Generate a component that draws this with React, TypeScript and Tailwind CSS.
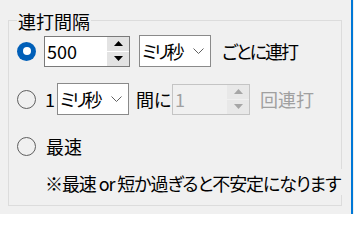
import React from 'react'

// Windows-style radio (selected = filled accent with white dot)
function Radio({ checked }: { checked?: boolean }) {
    return checked ? (
        <div className="w-[19px] h-[19px] shrink-0 rounded-full bg-[#005fb8] flex items-center justify-center">
            <div className="w-[8px] h-[8px] rounded-full bg-white" />
        </div>
    ) : (
        <div className="w-[19px] h-[19px] shrink-0 rounded-full border border-[#5f5f5f] bg-[#f0f0f0]" />
    )
}

function Arrow({ up, color }: { up?: boolean; color: string }) {
    return (
        <svg width="9" height="5" viewBox="0 0 9 5">
            <polygon points={up ? '0,5 4.5,0 9,5' : '0,0 9,0 4.5,5'} fill={color} />
        </svg>
    )
}

function SpinBox({ value, disabled, width }: { value: string; disabled?: boolean; width: string }) {
    const arrow = disabled ? '#a6a6a6' : '#000000'
    return (
        <div
            className={`${width} h-[31px] shrink-0 flex border ${disabled ? 'border-[#c4c4c4] bg-[#f0f0f0] text-[#a0a0a0]' : 'border-[#7a7a7a] bg-white'}`}
        >
            <span className="flex-1 pl-[2px] leading-[29px]">{value}</span>
            <div className="w-[22px] flex flex-col gap-[1px]">
                <div className={`flex-1 flex items-center justify-center ${disabled ? 'bg-[#e8e8e8]' : 'bg-[#e3e3e3]'}`}>
                    <Arrow up color={arrow} />
                </div>
                <div className={`flex-1 flex items-center justify-center ${disabled ? 'bg-[#e8e8e8]' : 'bg-[#e3e3e3]'}`}>
                    <Arrow color={arrow} />
                </div>
            </div>
        </div>
    )
}

function Dropdown() {
    return (
        <div className="w-[72px] h-[32px] shrink-0 flex items-center border border-[#8a8a8a] bg-white">
            <span className="pl-[2px] tracking-[-2.5px] whitespace-nowrap">ミリ秒</span>
            <svg className="ml-auto mr-[6px] shrink-0" width="11" height="6" viewBox="0 0 11 6">
                <polyline points="0.5,0.5 5.5,5.5 10.5,0.5" fill="none" stroke="#606060" strokeWidth="1" />
            </svg>
        </div>
    )
}

export default function App() {
    return (
        <div className="flex w-[354px] h-[214px] overflow-hidden bg-[#f0f0f0] text-black text-[18px] leading-[24px] font-['Noto_Sans_CJK_JP',sans-serif] [font-feature-settings:'palt']">
            {/* group box */}
            <div className="relative ml-[8px] mt-[20px] w-[334px] h-[186px] shrink-0 border border-[#dcdcdc] pl-[8px] pt-[14px]">
                <span className="absolute -top-[12px] left-[8px] px-[1px] bg-[#f0f0f0]">連打間隔</span>

                {/* every N ms */}
                <div className="h-[32px] flex items-center">
                    <Radio checked />
                    <div className="ml-[8px]">
                        <SpinBox value="500" width="w-[86px]" />
                    </div>
                    <div className="ml-[9px]">
                        <Dropdown />
                    </div>
                    <span className="ml-[11px] whitespace-nowrap tracking-[-2px]">ごとに連打</span>
                </div>

                {/* N times per interval */}
                <div className="mt-[16px] h-[32px] flex items-center">
                    <Radio />
                    <span className="ml-[9px] w-[12px]">1</span>
                    <Dropdown />
                    <span className="ml-[7px] w-[36px] whitespace-nowrap">間に</span>
                    <SpinBox value="1" disabled width="w-[78px]" />
                    <span className="ml-[10px] whitespace-nowrap text-[#a0a0a0]">回連打</span>
                </div>

                {/* fastest */}
                <div className="mt-[19px] h-[24px] flex items-center">
                    <Radio />
                    <span className="ml-[10px]">最速</span>
                </div>

                <div className="mt-[11px] h-[26px] flex">
                    <span className="ml-[28px] w-[300px] shrink-0 pt-[2px] bg-[#f0f0f0] whitespace-nowrap tracking-[-1.1px]">
                        ※最速 or 短か過ぎると不安定になります
                    </span>
                </div>
            </div>
            <div className="ml-auto mr-[1px] w-[2px] bg-[#0078d7]" />
        </div>
    )
}
